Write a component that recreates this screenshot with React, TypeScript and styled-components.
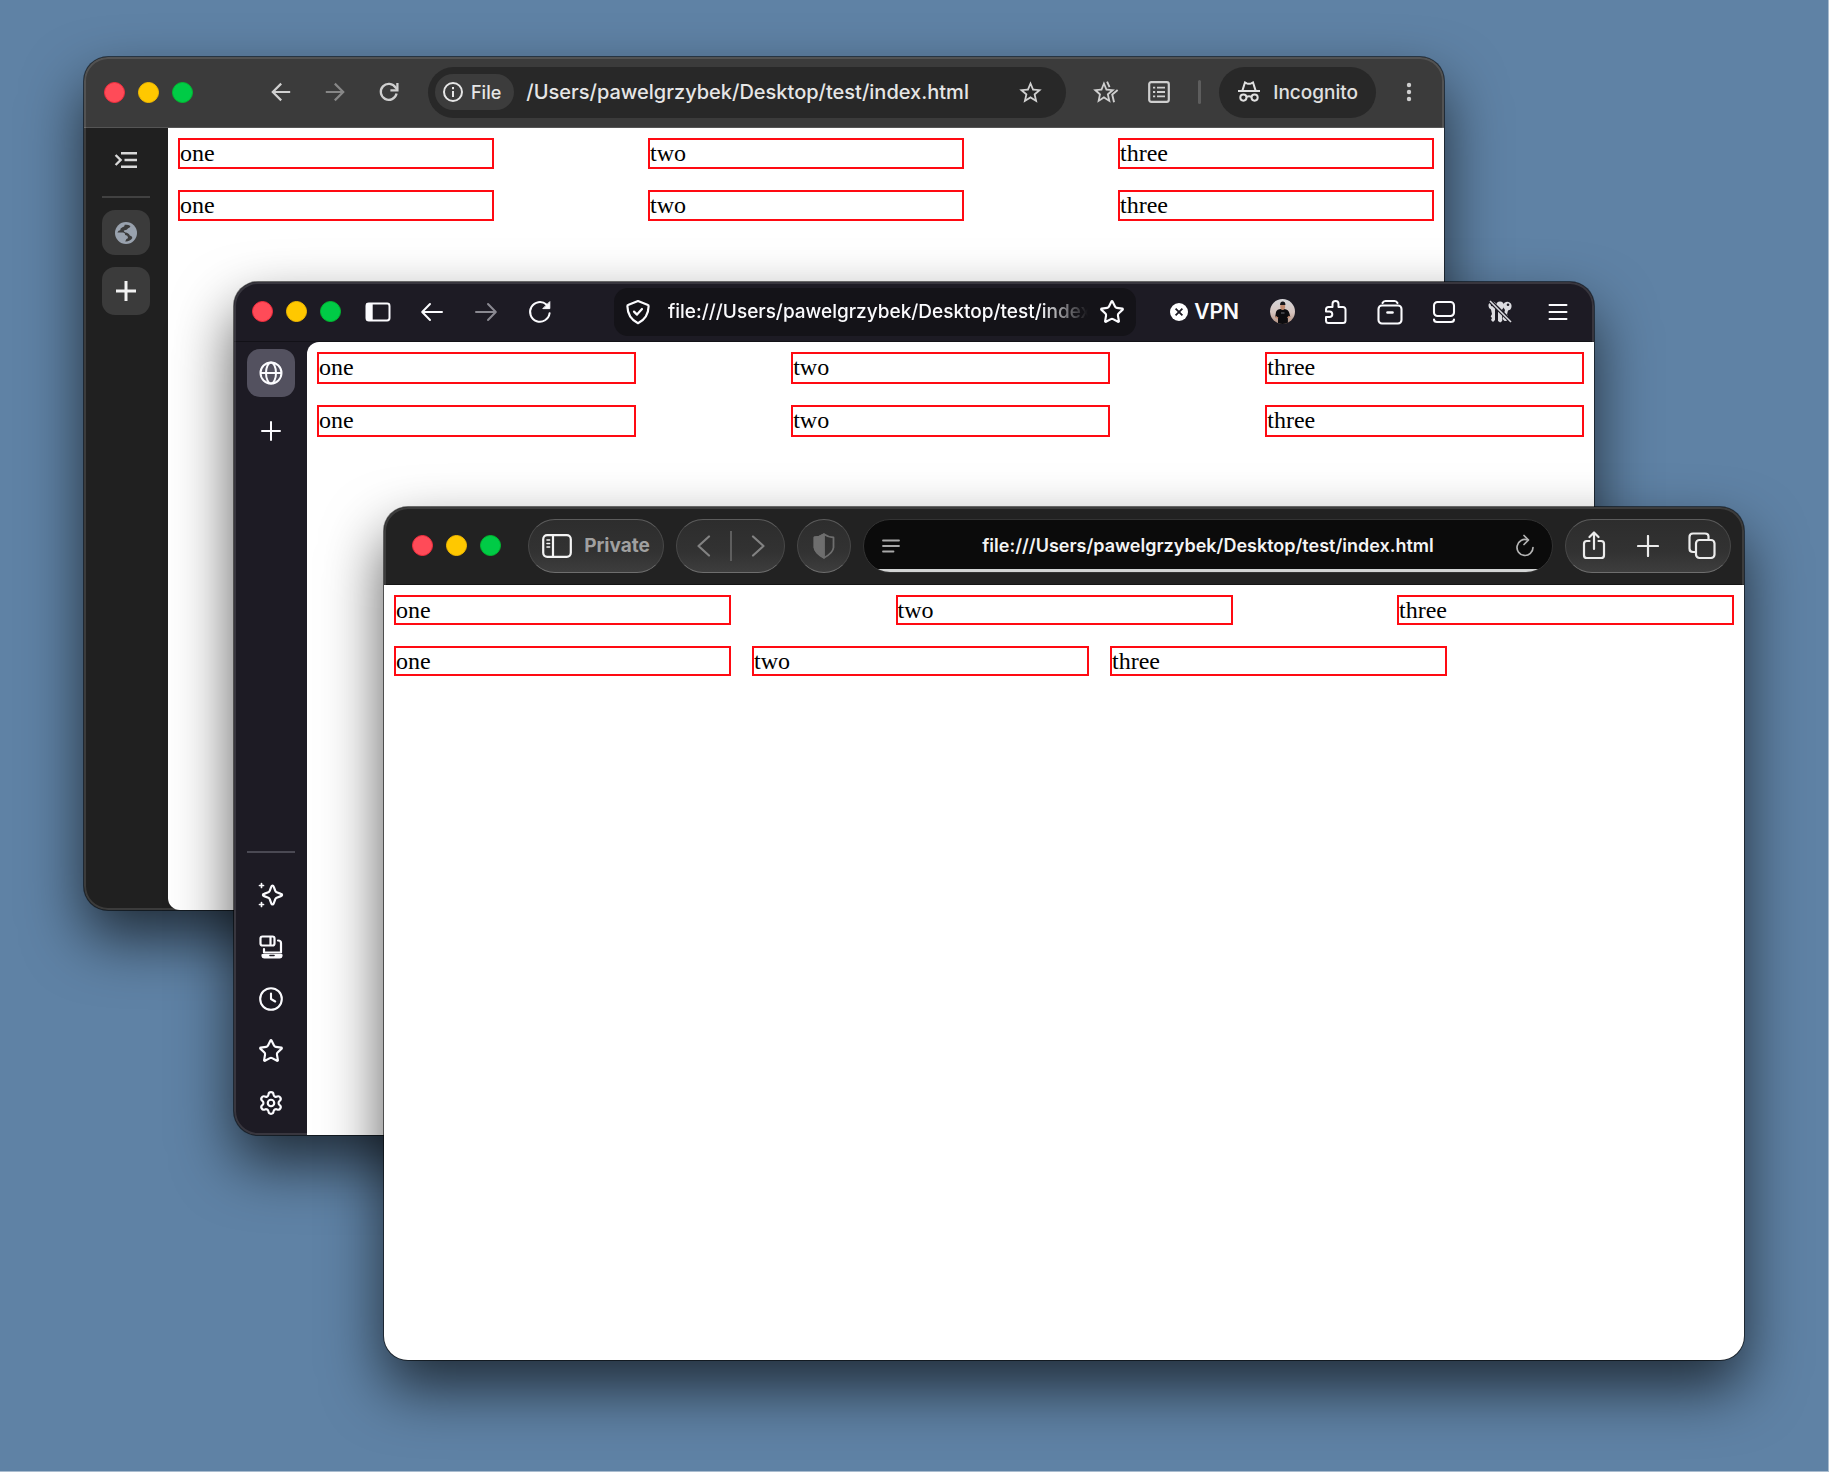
import React from "react";
import styled, { createGlobalStyle } from "styled-components";
import { Settings, Star } from "lucide-react";

const GlobalStyle = createGlobalStyle`
  *, *::before, *::after { box-sizing: border-box; }
  body { margin: 0; }
  button, input { font: inherit; color: inherit; }
`;

const uiFont = `Inter, "Liberation Sans", sans-serif`;

/* ---------- desktop and windows ---------- */

const Desktop = styled.main`
  position: relative;
  min-width: 1400px;
  min-height: 1100px;
  height: 100vh;
  overflow: hidden;
  background: #5f82a5;
  border: solid #a9bccf;
  border-width: 0 1px 1px 0;
  font-family: ${uiFont};
`;

const Window = styled.section<{
  $top: number;
  $left: number;
  $right: number;
  $bottom: number;
  $bg: string;
}>`
  position: absolute;
  top: ${(p) => p.$top}px;
  left: ${(p) => p.$left}px;
  right: ${(p) => p.$right}px;
  bottom: ${(p) => p.$bottom}px;
  display: flex;
  flex-direction: column;
  overflow: hidden;
  border-radius: 24px;
  background: ${(p) => p.$bg};
  box-shadow: 0 0 0 1px rgba(0, 0, 0, 0.55), 0 28px 60px rgba(0, 0, 0, 0.66);

  &::after {
    content: "";
    position: absolute;
    inset: 0;
    border-radius: inherit;
    pointer-events: none;
    box-shadow: inset 0 0 0 2px rgba(255, 255, 255, 0.12);
  }
`;

const Body = styled.div`
  flex: 1;
  display: flex;
  min-height: 0;
`;

/* ---------- the tested page ---------- */

const Page = styled.div<{ $radius?: string }>`
  flex: 1;
  min-width: 0;
  display: flex;
  flex-direction: column;
  gap: 21px;
  padding: 10px;
  background: #fff;
  border-radius: ${(p) => p.$radius ?? "0"};
`;

const Row = styled.div<{ $packed?: boolean }>`
  display: flex;
  justify-content: ${(p) => (p.$packed ? "flex-start" : "space-between")};
  gap: 21px;
`;

const Cell = styled.div<{ $extra: number }>`
  width: calc(25% + 2px);
  padding-bottom: ${(p) => p.$extra}px;
  border: 2px solid #ff0a12;
  color: #000;
  font: 24px/26px "Liberation Serif", "Times New Roman", serif;
`;

const words = ["one", "two", "three"];

function TestPage({ extra = 0, packed, radius }: { extra?: number; packed?: boolean; radius?: string }) {
  return (
    <Page $radius={radius}>
      {[false, packed].map((isPacked, i) => (
        <Row key={i} $packed={isPacked}>
          {words.map((word) => (
            <Cell key={word} $extra={extra}>{word}</Cell>
          ))}
        </Row>
      ))}
    </Page>
  );
}

/* ---------- shared toolbar parts ---------- */

const Toolbar = styled.header<{ $height: number; $pad: string; $bg: string; $line: string }>`
  flex: none;
  display: flex;
  align-items: center;
  height: ${(p) => p.$height}px;
  padding: ${(p) => p.$pad};
  background: ${(p) => p.$bg};
  border-bottom: 1px solid ${(p) => p.$line};
`;

const Lights = styled.div`
  display: flex;
  gap: 13px;
`;

const Light = styled.button<{ $fill: string; $edge: string }>`
  width: 21px;
  height: 21px;
  padding: 0;
  border: 1px solid ${(p) => p.$edge};
  border-radius: 50%;
  background: ${(p) => p.$fill};
`;

function TrafficLights() {
  return (
    <Lights>
      <Light aria-label="Close" $fill="#ff4b58" $edge="#f52d3e" />
      <Light aria-label="Minimise" $fill="#ffc800" $edge="#f5bc00" />
      <Light aria-label="Zoom" $fill="#00cb46" $edge="#00bb30" />
    </Lights>
  );
}

const IconButton = styled.button<{ $w?: number; $h?: number; $color?: string }>`
  flex: none;
  display: flex;
  align-items: center;
  justify-content: center;
  width: ${(p) => p.$w ?? 54}px;
  height: ${(p) => p.$h ?? 48}px;
  padding: 0;
  border: 0;
  background: none;
  color: ${(p) => p.$color ?? "inherit"};
`;

const Group = styled.div<{ $left: number }>`
  display: flex;
  align-items: center;
  margin-left: ${(p) => p.$left}px;
`;

const UrlInput = styled.input<{
  $size: number;
  $weight?: number;
  $left?: number;
  $center?: boolean;
  $fade?: boolean;
}>`
  flex: 1;
  min-width: 0;
  height: 32px;
  margin-left: ${(p) => p.$left ?? 0}px;
  padding: 0;
  border: 0;
  outline: 0;
  background: none;
  font-size: ${(p) => p.$size}px;
  font-weight: ${(p) => p.$weight ?? 500};
  text-align: ${(p) => (p.$center ? "center" : "left")};
  ${(p) => p.$fade && "mask-image: linear-gradient(to left, transparent, #000 48px);"}
`;

const SideDivider = styled.hr<{ $color: string; $gap: number }>`
  flex: none;
  width: 48px;
  height: 2px;
  margin: ${(p) => p.$gap}px 0;
  border: 0;
  background: ${(p) => p.$color};
`;

const SideTab = styled.button<{ $h: number; $bg: string }>`
  display: flex;
  align-items: center;
  justify-content: center;
  width: 48px;
  height: ${(p) => p.$h}px;
  padding: 0;
  border: 0;
  border-radius: 13px;
  background: ${(p) => p.$bg};
  color: inherit;
`;

/* ---------- icons ---------- */

type IconProps = { w: number; h?: number; sw?: number; children: React.ReactNode; round?: boolean };

function Icon({ w, h = w, sw = 2, round, children }: IconProps) {
  return (
    <svg
      width={w}
      height={h}
      viewBox={`0 0 ${w} ${h}`}
      fill="none"
      stroke="currentColor"
      strokeWidth={sw}
      strokeLinecap={round ? "round" : "butt"}
      strokeLinejoin={round ? "round" : "miter"}
      aria-hidden="true"
    >
      {children}
    </svg>
  );
}

const ArrowLeft = ({ round }: { round?: boolean }) => (
  <Icon w={24} round={round} sw={round ? 2 : 2.2}>
    {round ? <path d="M10 4 2.2 12 10 20M2.5 12H22" /> : <path d="M12.2 3.6 3.8 12l8.4 8.4M4 12h17.2" />}
  </Icon>
);
const ArrowRight = ({ round }: { round?: boolean }) => (
  <Icon w={24} round={round} sw={round ? 2 : 2.2}>
    {round ? <path d="M14 4 21.8 12 14 20M21.5 12H2" /> : <path d="M11.8 3.6 20.2 12l-8.4 8.4M20 12H2.8" />}
  </Icon>
);
const ChromeReload = () => (
  <Icon w={24} sw={2.3}>
    <path d="M19.6 13.6A8 8 0 1 1 18.6 7.6L20.4 9.6" />
    <path d="M20.4 3v7.4h-7" />
  </Icon>
);
const FirefoxReload = () => (
  <Icon w={26} round sw={2}>
    <path d="M22.6 14.2A9.8 9.8 0 1 1 19.4 5.6l1.6 1.6" />
    <path d="M22.8 3v6.6h-6.6z" fill="currentColor" strokeWidth={1} />
  </Icon>
);
const SharpStar = () => (
  <svg width="27" height="27" viewBox="0 0 24 24" fill="currentColor" aria-hidden="true">
    <path d="M22 9.24l-7.19-.62L12 2 9.19 8.63 2 9.24l5.46 4.73L5.82 21 12 17.27 18.18 21l-1.63-7.03L22 9.24zM12 15.4l-3.76 2.27 1-4.28-3.32-2.88 4.38-.38L12 6.1l1.71 4.04 4.38.38-3.32 2.88 1 4.28L12 15.4z" />
  </svg>
);
const BookmarksStar = () => (
  <svg width="27" height="27" viewBox="0 0 24 24" fill="currentColor" aria-hidden="true">
    <path d="M20.4 9.24l-7-.62L10.6 2 7.9 8.63 1 9.24l5.2 4.73L4.7 21l5.9-3.73L16.6 21l-1.63-7.03zM10.6 15.4 7 17.67l1-4.28-3.1-2.88 4.1-.38 1.6-4.03 1.7 4.04 4.1.38-3.2 2.88 1 4.28z" />
    <path d="M13.4 2.4l2.2 4.9M22.8 9.8l-4.8 4.1L19.6 20.6" fill="none" stroke="currentColor" strokeWidth="1.7" />
  </svg>
);
const ReadingList = () => (
  <Icon w={24} sw={2.2}>
    <rect x="2.2" y="2.2" width="19.6" height="19.6" rx="2" />
    <path d="M10 7.6h8M10 12h8M10 16.4h8M6 7.6h2.2M6 12h2.2M6 16.4h2.2" strokeWidth={1.9} />
  </Icon>
);
const IncognitoIcon = () => (
  <Icon w={24} sw={2}>
    <path d="M1 11h22" />
    <path d="M5.4 10.6 8 2.4l1.8.9q2.2 1 4.4 0l1.8-.9 2.6 8.2" />
    <circle cx="6.4" cy="17.6" r="3.1" />
    <circle cx="17.6" cy="17.6" r="3.1" />
    <path d="M9.4 17q2.6-1.6 5.2 0" />
  </Icon>
);
const InfoIcon = () => (
  <Icon w={22} sw={2}>
    <circle cx="11" cy="11" r="9" />
    <path d="M11 10v6M11 6v2.2" />
  </Icon>
);
const Dots = () => (
  <svg width="6" height="20" viewBox="0 0 6 20" fill="currentColor" aria-hidden="true">
    <circle cx="3" cy="3" r="2.2" />
    <circle cx="3" cy="10" r="2.2" />
    <circle cx="3" cy="17" r="2.2" />
  </svg>
);
const ExpandTabs = () => (
  <Icon w={24} h={18} sw={2.4}>
    <path d="M7 2.2h16M10.5 9H23M7 15.8h16M1.6 4l5 5-5 5" />
  </Icon>
);
const GlobeSolid = () => (
  <svg width="22" height="22" viewBox="0 0 22 22" aria-hidden="true">
    <circle cx="11" cy="11" r="11" fill="#99a2ae" />
    <path
      d="M2.4 10.4h5.8q2 .2 2 2.6 2.8.4 2.8 2.4 0 1-1.6 1.6l-1.2 2.4q4.8.2 7.2-3.4-.4-2.2-2.6-2.4-1.2-3-4.4-3.2-1.6-.4-1.6-2 3.6-.2 4.4-2.2 2.4-.6 2.2-2.2-2.6-1.8-5.6-1.2-.2 2.4-2.4 2.4-2.4 1-2.2 3-1.8 0-2.8 2.2z"
      fill="#3b3b3b"
    />
  </svg>
);
const Plus = ({ size, sw, round }: { size: number; sw: number; round?: boolean }) => (
  <Icon w={size} sw={sw} round={round}>
    <path d={`M${size / 2} 1v${size - 2}M1 ${size / 2}h${size - 2}`} />
  </Icon>
);
const FoxSidebar = () => (
  <Icon w={26} h={20} sw={2} round>
    <rect x="1.5" y="1.5" width="23" height="17" rx="2.4" />
    <path d="M2 2h5v16H2z" fill="currentColor" strokeWidth={1.4} />
  </Icon>
);
const ShieldCheckIcon = () => (
  <Icon w={26} round sw={2.2}>
    <path d="M13 2 23 6q.6 0 .6 1.2Q23.4 19 13 24.2 2.6 19 2.4 7.2 2.4 6 3 6z" />
    <path d="m9 12.6 3 3 5-5.6" />
  </Icon>
);
const VpnBadge = () => (
  <svg width="18" height="18" viewBox="0 0 18 18" aria-hidden="true">
    <circle cx="9" cy="9" r="9" fill="#fff" />
    <path d="m5.6 5.6 6.8 6.8m0-6.8-6.8 6.8" stroke="#1d1b24" strokeWidth="1.8" />
  </svg>
);
const Avatar = () => (
  <svg width="25" height="25" viewBox="0 0 25 25" aria-hidden="true">
    <defs>
      <clipPath id="avatarClip"><circle cx="12.5" cy="12.5" r="12.5" /></clipPath>
      <linearGradient id="avatarSky" x1="0" y1="0" x2="0" y2="1">
        <stop offset="0" stopColor="#d6d6da" />
        <stop offset=".55" stopColor="#d5c3bd" />
        <stop offset="1" stopColor="#b08e7d" />
      </linearGradient>
    </defs>
    <g clipPath="url(#avatarClip)">
      <path d="M0 0h25v25H0z" fill="url(#avatarSky)" />
      <path d="M6 13q1-3 5-3h3.5q4 .5 4.8 4l1 3.4-2.4 1V25H8v-6l-2.8-1z" fill="#0d0c0f" />
      <path d="M10.3 5.5h4.8v3.2q-.4 2.2-2.4 2.2t-2.4-2.2z" fill="#c08a70" />
      <path d="M10 6q.2-3.4 2.8-3.4T15.4 6z" fill="#15151a" />
      <path d="m5.4 17.5 2.6 1.8M19.6 17l-2 2" stroke="#c08a70" strokeWidth="1.6" />
      <path d="M11 14h3.5" stroke="#8b8b90" strokeWidth=".8" />
    </g>
  </svg>
);
const Puzzle = () => (
  <Icon w={24} h={26} round>
    <path d="M8.5 8V5a3 3 0 0 1 6 0v3h4.5a2.5 2.5 0 0 1 2.5 2.5v11a2.5 2.5 0 0 1-2.5 2.5H4.5A2.5 2.5 0 0 1 2 21.5V18h3.5a2.8 2.8 0 0 0 0-5.6H2V10.5A2.5 2.5 0 0 1 4.5 8z" />
  </Icon>
);
const Archive = () => (
  <Icon w={26} round sw={2.1}>
    <path d="M5.5 4Q6.5 2 8.5 2h9q2 0 3 2" />
    <rect x="1.5" y="6.5" width="23" height="18" rx="3.5" />
    <path d="M10.5 13.5h5" strokeWidth={2.6} />
  </Icon>
);
const Screen = () => (
  <Icon w={24} round sw={2.1}>
    <rect x="2" y="2" width="20" height="14" rx="3.5" />
    <path d="M2 19.5q0 2.500 3 2.500h14q3 0 3-2.500" />
  </Icon>
);
const Keys = () => (
  <svg width="26" height="24" viewBox="0 0 26 24" aria-hidden="true">
    <g fill="#dcdce0">
      <path d="M1.5 6a4 4 0 0 1 4-4.5q4 .5 4 4.5 0 2.5-1.5 3.5V20l-2 2-2-2 1-2-1.3-1.5L5 14l-1-4.5Q1.5 8.5 1.5 6z" />
      <path d="M9 5.5Q9.5 1.5 13 1.5T17 5.500q0 2.600-1.800 3.800V21l-2 1.5-2.2-1.5V9.3Q9 8 9 5.5z" />
      <path d="M16 4.5q2-3.5 5.5-2.5t3 5q-.5 3-3.5 3.5l-1 4 1 1-1 2 .5 1.5-1 2h-2L15.5 19l2.5-9q-2.500-2.500-2-5.500z" />
    </g>
    <circle cx="21" cy="4.8" r="1.3" fill="#1d1b24" />
    <circle cx="5" cy="5" r="1.2" fill="#1d1b24" />
    <path d="m3 1 22 21.5" stroke="#1d1b24" strokeWidth="4" />
    <path d="m3 1 21 21" stroke="#dcdce0" strokeWidth="1.6" />
  </svg>
);
const Menu = () => (
  <Icon w={20} h={18} round sw={2}>
    <path d="M1.5 2h17M1.5 9h17M1.5 16h17" />
  </Icon>
);
const GlobeLines = () => (
  <Icon w={24} sw={2}>
    <circle cx="12" cy="12" r="10.5" />
    <ellipse cx="12" cy="12" rx="5" ry="10.5" />
    <path d="M1.5 12h21" />
  </Icon>
);
const Sparkles = () => (
  <Icon w={26} round sw={2.2}>
    <path d="M14.5 3.5q.8 0 1.2 1.2l1.6 4.2q.4 1 1.4 1.4l4.2 1.6q1.2.4 1.2 1.1t-1.2 1.1l-4.2 1.6q-1 .4-1.4 1.4l-1.6 4.2q-.4 1.2-1.2 1.2t-1.2-1.2l-1.6-4.2q-.4-1-1.4-1.4l-4.2-1.6Q4.9 13.7 4.9 13t1.2-1.1l4.2-1.6q1-.4 1.4-1.4l1.6-4.2q.4-1.2 1.2-1.2z" />
    <path d="M3.5 1.5v4M1.5 3.5h4M3.5 20.5v4M1.5 22.5h4" strokeWidth={1.7} />
  </Icon>
);
const Devices = () => (
  <Icon w={26} round sw={2.2}>
    <rect x="2.5" y="2.5" width="14" height="9" rx="2" />
    <path d="M12.5 3v8" />
    <path d="M20 6.5q3 0 3 2.5v9.5M6 15v3.5h16" />
    <path d="M4.5 21h19q0 2.5-2 2.5h-15q-2 0-2-2.5z" fill="currentColor" />
    <path d="M12 21.5h4" stroke="#1d1b24" strokeWidth={1.6} />
  </Icon>
);
const Clock = () => (
  <Icon w={26} round sw={2.1}>
    <circle cx="13" cy="13" r="10.8" />
    <path d="M13 7.5V13l4.2 2.5" />
  </Icon>
);
const SafariSidebar = () => (
  <Icon w={30} h={24} round sw={2.2}>
    <rect x="1.2" y="1.2" width="27.6" height="21.6" rx="4" />
    <path d="M11 1.5v21" />
    <path d="M5 6h2.6M5 9.5h2.6M5 13h2.6" strokeWidth={1.6} />
  </Icon>
);
const Chevron = ({ right }: { right?: boolean }) => (
  <Icon w={14} h={22} round sw={2.2}>
    <path d={right ? "M2 1.5 12.5 11 2 20.5" : "M12 1.5 1.5 11 12 20.5"} />
  </Icon>
);
const HalfShield = () => (
  <Icon w={22} h={26} round sw={1.8}>
    <path d="M11 1.2q4 2.8 9.5 3.3v10Q20 20 11 24.8 2 20 1.5 14.5v-10Q7 4 11 1.2z" />
    <path d="M11 1.2v23.6Q2 20 1.5 14.5v-10Q7 4 11 1.2z" fill="currentColor" />
  </Icon>
);
const TextLines = () => (
  <Icon w={18} h={14} sw={1.8} round>
    <path d="M1 1.5h16M1 7h16M1 12.5h10.5" />
  </Icon>
);
const SafariReload = () => (
  <Icon w={20} h={24} round sw={1.7}>
    <path d="M18 13.5a8 8 0 1 1-5.5-7.6" />
    <path d="M9 1.5 13.5 6 9 10.5" />
  </Icon>
);
const Share = () => (
  <Icon w={24} h={30} round sw={2.2}>
    <path d="M7.5 10H4.8Q2 10 2 12.8v11.4Q2 27 4.8 27h14.4Q22 27 22 24.2V12.8Q22 10 19.2 10h-2.7" />
    <path d="M12 18V2M7.5 6 12 1.5 16.5 6" />
  </Icon>
);
const Tabs = () => (
  <Icon w={28} round sw={2.2}>
    <rect x="8" y="8" width="18.5" height="18" rx="3.5" />
    <path d="M8 20H5q-3.5 0-3.5-3.5V5Q1.5 1.5 5 1.5h12q3.5 0 3.5 3v3" />
  </Icon>
);

/* ---------- Chrome ---------- */

const Omnibox = styled.div`
  flex: 1;
  min-width: 0;
  display: flex;
  align-items: center;
  height: 51px;
  margin: 0 12px;
  padding: 0 9px 0 7px;
  border-radius: 26px;
  background: #282828;
  color: #e6e6e6;
`;

const FileChip = styled.button`
  flex: none;
  display: flex;
  align-items: center;
  gap: 7px;
  height: 36px;
  margin-right: 12px;
  padding: 0 13px 0 7px;
  border: 0;
  border-radius: 18px;
  background: #3c3c3c;
  font-size: 18px;
  font-weight: 500;
`;

const Separator = styled.span`
  width: 3px;
  height: 24px;
  margin: 0 18px 0 12px;
  border-radius: 2px;
  background: #5d5d5d;
`;

const IncognitoPill = styled.button`
  display: flex;
  align-items: center;
  gap: 12px;
  height: 51px;
  margin-right: 12px;
  padding: 0 18px;
  border: 0;
  border-radius: 26px;
  background: #282828;
  color: #e0e0e0;
  font-size: 19px;
  font-weight: 500;
`;

const ChromeSidebar = styled.aside`
  flex: none;
  display: flex;
  flex-direction: column;
  align-items: center;
  width: 84px;
  padding-top: 8px;
  background: #202020;
  color: #d8d8d8;
`;

const ChromeTabs = styled.div`
  display: flex;
  flex-direction: column;
  gap: 12px;
  color: #f2f2f2;
`;

function ChromeWindow() {
  return (
    <Window $top={57} $left={84} $right={384} $bottom={561} $bg="#202020" aria-label="Chrome">
      <Toolbar $height={71} $pad="0 14px 0 20px" $bg="#3b3b3b" $line="#555">
        <TrafficLights />
        <Group $left={61}>
          <IconButton aria-label="Back" $color="#cfcfcf"><ArrowLeft /></IconButton>
          <IconButton aria-label="Forward" $color="#868686"><ArrowRight /></IconButton>
          <IconButton aria-label="Reload" $color="#cfcfcf"><ChromeReload /></IconButton>
        </Group>
        <Omnibox>
          <FileChip><InfoIcon />File</FileChip>
          <UrlInput $size={20} aria-label="Address" defaultValue="/Users/pawelgrzybek/Desktop/test/index.html" />
          <IconButton aria-label="Bookmark this tab" $color="#d0d0d0"><SharpStar /></IconButton>
        </Omnibox>
        <IconButton aria-label="Bookmarks" $color="#cfcfcf"><BookmarksStar /></IconButton>
        <IconButton aria-label="Reading list" $color="#cfcfcf"><ReadingList /></IconButton>
        <Separator />
        <IncognitoPill><IncognitoIcon />Incognito</IncognitoPill>
        <IconButton aria-label="Menu" $w={42} $color="#cfcfcf"><Dots /></IconButton>
      </Toolbar>
      <Body>
        <ChromeSidebar>
          <IconButton aria-label="Expand tabs"><ExpandTabs /></IconButton>
          <SideDivider $color="#414141" $gap={12} />
          <ChromeTabs>
            <SideTab aria-label="index.html" $h={45} $bg="#3b3b3b"><GlobeSolid /></SideTab>
            <SideTab aria-label="New tab" $h={48} $bg="#3b3b3b"><Plus size={22} sw={3} /></SideTab>
          </ChromeTabs>
        </ChromeSidebar>
        <TestPage extra={1} radius="0 0 0 12px" />
      </Body>
    </Window>
  );
}

/* ---------- Firefox ---------- */

const AwesomeBar = styled.div`
  flex: 1;
  min-width: 0;
  display: flex;
  align-items: center;
  height: 48px;
  margin: 0 34px 0 47px;
  border-radius: 14px;
  background: #141318;
`;

const VpnButton = styled.button`
  display: flex;
  align-items: center;
  gap: 6px;
  margin-right: 16px;
  padding: 0;
  border: 0;
  background: none;
  font-size: 21px;
  font-weight: 600;
`;

const FirefoxSidebar = styled.aside`
  flex: none;
  display: flex;
  flex-direction: column;
  align-items: center;
  width: 73px;
  padding: 7px 0 6px;
`;

const FirefoxTabs = styled.div`
  flex: 1;
  display: flex;
  flex-direction: column;
  align-items: center;
  gap: 10px;
`;

const FirefoxFrame = styled.div`
  flex: 1;
  display: flex;
  flex-direction: column;
  min-height: 0;
  color: #fbfbfe;
`;

function FirefoxWindow() {
  return (
    <Window $top={282} $left={234} $right={234} $bottom={336} $bg="#1d1b24" aria-label="Firefox">
      <FirefoxFrame>
        <Toolbar $height={60} $pad="0 7px 0 18px" $bg="#1d1b24" $line="#121117">
          <TrafficLights />
          <Group $left={10}>
            <IconButton aria-label="Sidebar"><FoxSidebar /></IconButton>
            <IconButton aria-label="Back"><ArrowLeft round /></IconButton>
            <IconButton aria-label="Forward" $color="#8a8991"><ArrowRight round /></IconButton>
            <IconButton aria-label="Reload"><FirefoxReload /></IconButton>
          </Group>
          <AwesomeBar>
            <IconButton aria-label="Site information" $w={48}><ShieldCheckIcon /></IconButton>
            <UrlInput
              $size={19}
              $left={6}
              $fade
              aria-label="Address"
              defaultValue="file:///Users/pawelgrzybek/Desktop/test/index.html"
            />
            <IconButton aria-label="Bookmark this page" $w={48}><Star size={26} strokeWidth={2} /></IconButton>
          </AwesomeBar>
          <VpnButton><VpnBadge />VPN</VpnButton>
          <IconButton aria-label="Profile"><Avatar /></IconButton>
          <IconButton aria-label="Extensions"><Puzzle /></IconButton>
          <IconButton aria-label="Archive"><Archive /></IconButton>
          <IconButton aria-label="Responsive view"><Screen /></IconButton>
          <IconButton aria-label="Passwords" $w={58}><Keys /></IconButton>
          <IconButton aria-label="Menu" $w={58}><Menu /></IconButton>
        </Toolbar>
        <Body>
          <FirefoxSidebar>
            <FirefoxTabs>
              <SideTab aria-label="index.html" $h={48} $bg="#53515f"><GlobeLines /></SideTab>
              <IconButton aria-label="New tab"><Plus size={20} sw={2} round /></IconButton>
            </FirefoxTabs>
            <SideDivider $color="#4a4953" $gap={16} />
            <IconButton $h={52} aria-label="AI chat"><Sparkles /></IconButton>
            <IconButton $h={52} aria-label="Synced tabs"><Devices /></IconButton>
            <IconButton $h={52} aria-label="History"><Clock /></IconButton>
            <IconButton $h={52} aria-label="Bookmarks"><Star size={26} strokeWidth={2} /></IconButton>
            <IconButton $h={52} aria-label="Settings"><Settings size={26} strokeWidth={2} /></IconButton>
          </FirefoxSidebar>
          <TestPage extra={2} radius="12px 0 0 0" />
        </Body>
      </FirefoxFrame>
    </Window>
  );
}

/* ---------- Safari ---------- */

const GlassGroup = styled.div<{ $w: number; $color: string }>`
  flex: none;
  display: flex;
  align-items: center;
  justify-content: center;
  width: ${(p) => p.$w}px;
  height: 54px;
  border: 1px solid #484848;
  border-top-color: #5c5c5c;
  border-bottom-color: #6e6e6e;
  border-radius: 27px;
  background: linear-gradient(#2d2d2d, #323232 60%, #3d3d3d);
  color: ${(p) => p.$color};
`;

const SafariTools = styled.div`
  flex: 1;
  display: flex;
  align-items: center;
  gap: 12px;
  margin-left: 27px;
`;

const PrivateButton = styled.button`
  display: flex;
  align-items: center;
  gap: 12px;
  padding: 0;
  border: 0;
  background: none;
  font-size: 19px;
  font-weight: 700;
`;

const PrivateIcon = styled.span`
  display: flex;
  color: #f4f4f4;
`;

const NavSplit = styled.span`
  width: 2px;
  height: 30px;
  background: #5e5e5e;
`;

const SmartField = styled.div`
  position: relative;
  flex: 1;
  min-width: 0;
  display: flex;
  align-items: center;
  height: 54px;
  overflow: hidden;
  border: 1px solid #333;
  border-radius: 27px;
  background: #0b0b0b;
  color: #f4f4f4;
`;

const Progress = styled.div`
  position: absolute;
  inset: auto 0 0;
  height: 3px;
  background: #d2d4d4;
`;

function SafariWindow() {
  return (
    <Window $top={507} $left={384} $right={84} $bottom={111} $bg="#222" aria-label="Safari">
      <Toolbar $height={78} $pad="0 13px 0 28px" $bg="#222" $line="#151515">
        <TrafficLights />
        <SafariTools>
          <GlassGroup $w={136} $color="#a0a0a0">
            <PrivateButton><PrivateIcon><SafariSidebar /></PrivateIcon>Private</PrivateButton>
          </GlassGroup>
          <GlassGroup $w={109} $color="#828282">
            <IconButton aria-label="Back" $w={52}><Chevron /></IconButton>
            <NavSplit />
            <IconButton aria-label="Forward" $w={52}><Chevron right /></IconButton>
          </GlassGroup>
          <GlassGroup $w={54} $color="#6e6e6e">
            <IconButton aria-label="Privacy report" $w={52}><HalfShield /></IconButton>
          </GlassGroup>
          <SmartField>
            <IconButton aria-label="Page menu" $color="#a8a8a8"><TextLines /></IconButton>
            <UrlInput
              $size={18}
              $weight={600}
              $center
              aria-label="Address"
              defaultValue="file:///Users/pawelgrzybek/Desktop/test/index.html"
            />
            <IconButton aria-label="Reload" $color="#b4b4b4"><SafariReload /></IconButton>
            <Progress />
          </SmartField>
          <GlassGroup $w={166} $color="#ececec">
            <IconButton aria-label="Share"><Share /></IconButton>
            <IconButton aria-label="New tab"><Plus size={22} sw={2.2} round /></IconButton>
            <IconButton aria-label="Tab overview"><Tabs /></IconButton>
          </GlassGroup>
        </SafariTools>
      </Toolbar>
      <Body>
        <TestPage packed />
      </Body>
    </Window>
  );
}

export default function App() {
  return (
    <>
      <GlobalStyle />
      <Desktop>
        <ChromeWindow />
        <FirefoxWindow />
        <SafariWindow />
      </Desktop>
    </>
  );
}
